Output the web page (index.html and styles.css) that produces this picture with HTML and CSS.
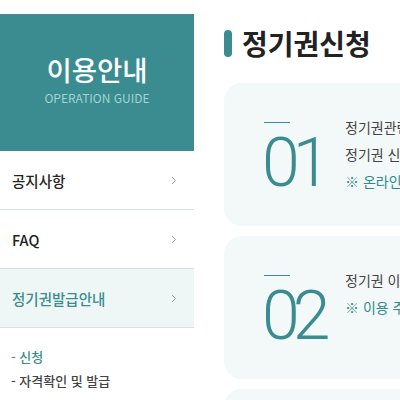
FILE: index.html
```html
<!DOCTYPE html>
<html lang="ko">
<head>
<meta charset="utf-8">
<title>정기권신청</title>
<link rel="stylesheet" href="styles.css">
</head>
<body>
<div class="page">
  <aside class="sidebar">
    <div class="side-head">
      <h2 class="side-title">이용안내</h2>
      <p class="side-sub">OPERATION GUIDE</p>
    </div>
    <ul class="menu">
      <li class="menu-item"><span>공지사항</span><svg class="chev" width="6" height="9" viewBox="0 0 6 9"><path d="M1 1l3.5 3.5L1 8" fill="none" stroke="#9a9a9a" stroke-width="1"/></svg></li>
      <li class="menu-item"><span>FAQ</span><svg class="chev" width="6" height="9" viewBox="0 0 6 9"><path d="M1 1l3.5 3.5L1 8" fill="none" stroke="#9a9a9a" stroke-width="1"/></svg></li>
      <li class="menu-item active"><span>정기권발급안내</span><svg class="chev" width="6" height="9" viewBox="0 0 6 9"><path d="M1 1l3.5 3.5L1 8" fill="none" stroke="#9a9a9a" stroke-width="1"/></svg></li>
    </ul>
    <ul class="submenu">
      <li class="sub-item on">- 신청</li>
      <li class="sub-item">- 자격확인 및 발급</li>
    </ul>
  </aside>
  <main class="main">
    <h1 class="page-title"><span class="bar"></span>정기권신청</h1>
    <div class="card">
      <div class="num"><span class="num-line"></span><span class="num-text">01</span></div>
      <div class="desc">
        <p class="line">정기권관련 신청서를 작성하여 제출하시기 바랍니다.</p>
        <p class="line">정기권 신청은 방문 또는 온라인으로 가능합니다.</p>
        <p class="line note">※ 온라인 신청 시 증빙서류를 첨부해 주십시오.</p>
      </div>
    </div>
    <div class="card">
      <div class="num"><span class="num-line"></span><span class="num-text">02</span></div>
      <div class="desc">
        <p class="line">정기권 이용 자격을 확인한 후 발급합니다.</p>
        <p class="line note">※ 이용 주차장을 반드시 확인하시기 바랍니다.</p>
      </div>
    </div>
    <div class="card">
      <div class="num"><span class="num-line"></span><span class="num-text">03</span></div>
      <div class="desc">
        <p class="line">정기권 요금을 납부합니다.</p>
      </div>
    </div>
  </main>
</div>
</body>
</html>
```
FILE: styles.css
```css
html, body {
  margin: 0;
  padding: 0;
  overflow: hidden;
  background: #fff;
}
body {
  font-family: "Noto Sans CJK KR", "Noto Sans", sans-serif;
  color: #333;
}
.page {
  display: flex;
  padding-top: 14px;
  width: 1200px;
}
.sidebar {
  width: 194px;
  flex: none;
}
.side-head {
  background: #3a8c91;
  height: 137px;
  box-sizing: border-box;
  padding-top: 39px;
  text-align: center;
}
.side-title {
  margin: 0;
  font-size: 27.5px;
  line-height: 32px;
  font-weight: 500;
  color: #fff;
}
.side-sub {
  margin: 5px 0 0;
  font-size: 12px;
  line-height: 16px;
  color: #a3d2d1;
}
.menu, .submenu {
  list-style: none;
  margin: 0;
  padding: 0;
}
.menu-item {
  height: 58px;
  border-bottom: 1px solid #d6e2e2;
  display: flex;
  align-items: center;
  justify-content: space-between;
  padding: 0 17px 0 12px;
  font-size: 14.5px;
  font-weight: 500;
  color: #222;
}
.menu-item.active {
  background: #eff7f6;
  color: #3a8c91;
}
.chev {
  display: block;
}
.submenu {
  padding: 17px 0 0 11px;
}
.sub-item {
  font-size: 13px;
  line-height: 24px;
  font-weight: 500;
  color: #444;
}
.sub-item.on {
  color: #3a8c91;
}
.main {
  margin-left: 30px;
  flex: none;
  width: 900px;
}
.page-title {
  margin: 15px 0 0;
  display: flex;
  align-items: center;
  gap: 10px;
  height: 28px;
  font-size: 28px;
  line-height: 28px;
  font-weight: 700;
  color: #222;
}
.bar {
  width: 8px;
  height: 27px;
  border-radius: 4px;
  background: #3a8c91;
}
.card {
  margin-top: 26px;
  height: 143px;
  box-sizing: border-box;
  background: #f3f8f8;
  border-radius: 18px;
  padding: 31px 0 0 40px;
  display: flex;
}
.card + .card {
  margin-top: 10px;
}
.num {
  width: 81px;
  flex: none;
  display: flex;
  flex-direction: column;
  padding-top: 8px;
}
.num-line {
  width: 26px;
  height: 1px;
  background: #3a8c91;
}
.num-text {
  margin-top: 6px;
  margin-left: -2px;
  font-family: Roboto, sans-serif;
  font-weight: 300;
  font-size: 68px;
  line-height: 1;
  letter-spacing: -7px;
  color: #3a8c91;
}
.desc {
  white-space: nowrap;
}
.line {
  margin: 0;
  font-size: 14px;
  line-height: 27px;
  color: #444;
}
.line.note {
  color: #2f8b90;
}
```
